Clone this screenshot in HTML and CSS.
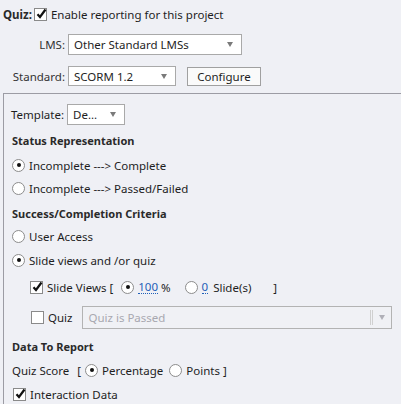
FILE: index.html
```html
<!DOCTYPE html>
<html>
<head>
<meta charset="utf-8">
<link rel="stylesheet" href="styles.css">
</head>
<body>
<div class="top">
  <div class="row r-quiz">
    <span class="bold">Quiz:</span>
    <span class="cb checked"><svg viewBox="0 0 12 12" width="12" height="12"><path d="M2.5 6.2 L5 9 L10.5 1.5" fill="none" stroke="#111" stroke-width="2.2"/></svg></span>
    <span class="t-enable">Enable reporting for this project</span>
  </div>
  <div class="row r-lms">
    <span class="lbl">LMS:</span>
    <span class="select sel-lms"><span class="val">Other Standard LMSs</span><span class="arrow"></span></span>
  </div>
  <div class="row r-std">
    <span class="lbl">Standard:</span>
    <span class="select sel-std"><span class="val">SCORM 1.2</span><span class="arrow"></span></span>
    <span class="btn">Configure</span>
  </div>
</div>
<div class="panel">
  <div class="row r-tpl">
    <span class="lbl-tpl">Template:</span>
    <span class="select sel-tpl"><span class="val">De...</span><span class="arrow"></span></span>
  </div>
  <div class="row head m5">Status Representation</div>
  <div class="row m5"><span class="radio on"></span><span>Incomplete ---&gt; Complete</span></div>
  <div class="row m3"><span class="radio"></span><span>Incomplete ---&gt; Passed/Failed</span></div>
  <div class="row head m5">Success/Completion Criteria</div>
  <div class="row m3"><span class="radio"></span><span>User Access</span></div>
  <div class="row m4"><span class="radio on"></span><span>Slide views and /or quiz</span></div>
  <div class="row m7 indent">
    <span class="cb checked"><svg viewBox="0 0 12 12" width="12" height="12"><path d="M2.5 6.2 L5 9 L10.5 1.5" fill="none" stroke="#111" stroke-width="2.2"/></svg></span>
    <span class="t-sv">Slide Views [</span>
    <span class="radio on r-pct"></span>
    <span class="link">100</span><span class="pct">%</span>
    <span class="radio r-sl"></span>
    <span class="link">0</span><span class="t-slides">Slide(s)</span>
    <span class="t-br">]</span>
  </div>
  <div class="row m9 indent r-quizsel">
    <span class="cb"></span>
    <span class="t-quiz">Quiz</span>
    <span class="select sel-quiz disabled"><span class="val">Quiz is Passed</span><span class="sep"></span><span class="arrow"></span></span>
  </div>
  <div class="row head m7">Data To Report</div>
  <div class="row m4">
    <span class="t-qs">Quiz Score</span>
    <span class="t-ob">[</span>
    <span class="radio on"></span><span class="t-perc">Percentage</span>
    <span class="radio"></span><span>Points</span><span class="t-cb">]</span>
  </div>
  <div class="row m4">
    <span class="cb checked cb-id"><svg viewBox="0 0 12 12" width="12" height="12"><path d="M2.5 6.2 L5 9 L10.5 1.5" fill="none" stroke="#111" stroke-width="2.2"/></svg></span>
    <span class="t-id">Interaction Data</span>
  </div>
</div>
</body>
</html>
```
FILE: styles.css
```css
html, body {
  margin: 0;
  padding: 0;
  background: #eff0f5;
  overflow: hidden;
  width: 401px;
  height: 404px;
}
body {
  font-family: "Noto Sans", "DejaVu Sans", sans-serif;
  font-size: 11.5px;
  color: #1e1e1e;
}
.row {
  display: flex;
  align-items: center;
  height: 20px;
  white-space: nowrap;
}
.top {
  padding-left: 3px;
}
.r-quiz {
  margin-top: 4px;
}
.bold, .head {
  font-weight: bold;
  color: #2a2a2a;
  font-size: 11px;
}
.bold {
  font-size: 11.5px;
}
.cb {
  width: 11px;
  height: 11px;
  border: 1px solid #8a8a8a;
  background: #fff;
  display: inline-flex;
  flex: none;
  box-sizing: content-box;
  position: relative;
}
.cb svg {
  position: absolute;
  left: 0;
  top: -1px;
}
.r-quiz .cb {
  margin-left: 2px;
  margin-right: 4px;
}
.lbl {
  width: 62px;
  text-align: right;
  padding-right: 3px;
  color: #333;
}
.r-lms {
  margin-top: 10px;
  height: 21px;
}
.r-std {
  margin-top: 11px;
}
.select {
  display: flex;
  align-items: center;
  background: #fff;
  border: 1px solid #a9a9a9;
  box-sizing: border-box;
  padding-left: 5px;
  position: relative;
  height: 100%;
}
.select .val {
  flex: 1;
}
.arrow {
  width: 0;
  height: 0;
  border-left: 3.5px solid transparent;
  border-right: 3.5px solid transparent;
  border-top: 5px solid #7a7a7a;
  margin-right: 8px;
}
.sel-lms {
  width: 174px;
}
.sel-std {
  width: 108px;
}
.btn {
  margin-left: 11px;
  width: 74px;
  height: 19px;
  box-sizing: border-box;
  border: 1px solid #a0a0a0;
  background: #fafafa;
  display: flex;
  align-items: center;
  justify-content: center;
}
.panel {
  margin-top: 7px;
  margin-left: 3px;
  border-top: 1px solid #9c9ca4;
  border-left: 1px solid #9c9ca4;
  padding-left: 8px;
  height: 310px;
}
.r-tpl {
  margin-top: 10px;
  height: 21px;
  margin-left: -1px;
}
.lbl-tpl {
  margin-right: 3px;
}
.sel-tpl {
  width: 58px;
}
.m3 { margin-top: 3px; }
.m4 { margin-top: 4px; }
.m5 { margin-top: 5px; }
.m7 { margin-top: 7px; }
.m9 { margin-top: 9px; }
.radio {
  width: 11px;
  height: 11px;
  border: 1px solid #8c8c8c;
  border-radius: 50%;
  background: #fff;
  display: inline-flex;
  align-items: center;
  justify-content: center;
  margin-right: 4px;
  flex: none;
}
.radio.on::after {
  content: "";
  width: 4px;
  height: 4px;
  border-radius: 50%;
  background: #111;
}
.indent {
  padding-left: 18px;
}
.indent .cb {
  margin-right: 4px;
}
.t-sv {
  margin-right: 8px;
}
.link {
  color: #1f5fb8;
  border-bottom: 1px dotted #1f5fb8;
  line-height: 13px;
}
.pct {
  margin-left: 3px;
  margin-right: 14px;
}
.t-slides {
  margin-left: 5px;
  margin-right: 22px;
}
.r-quizsel {
  height: 23px;
}
.r-quizsel .cb {
  margin-left: 1px;
}
.t-quiz {
  margin-right: 10px;
}
.sel-quiz {
  width: 310px;
  border-color: #b3b3b3;
  color: #a8a8b0;
  background: #f0f1f5;
}
.sel-quiz .sep {
  width: 1px;
  height: 15px;
  border-left: 1px solid #d0d0d0;
  border-right: 1px solid #d0d0d0;
  margin-right: 6px;
}
.sel-quiz .arrow {
  border-top-color: #b0b0b8;
  margin-right: 6px;
}
.t-qs {
  margin-right: 8px;
}
.t-ob {
  margin-right: 4px;
}
.t-perc {
  margin-right: 6px;
}
.t-cb {
  margin-left: 3px;
}
.cb-id {
  margin-left: 1px;
  margin-right: 4px;
}
```
